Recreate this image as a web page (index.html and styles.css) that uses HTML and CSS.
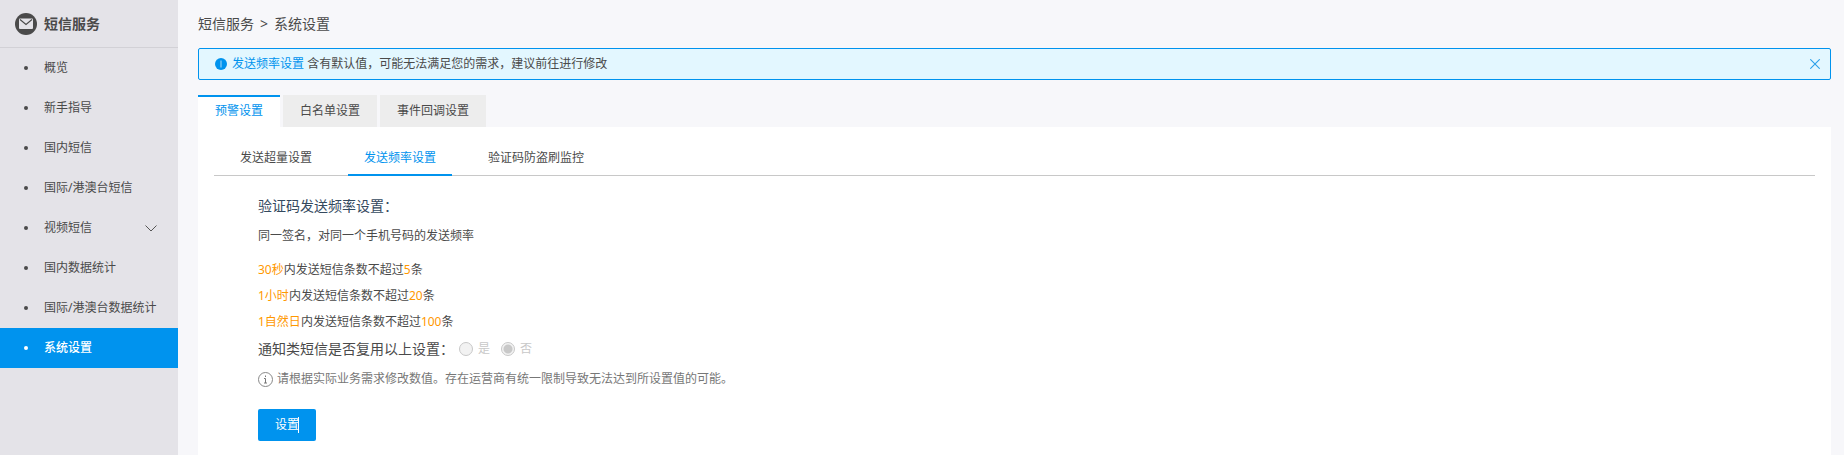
FILE: index.html
```html
<!DOCTYPE html>
<html lang="zh-CN">
<head>
<meta charset="utf-8">
<title>系统设置</title>
<link rel="stylesheet" href="styles.css">
</head>
<body>
<div class="layout">
  <aside class="sidebar">
    <div class="sidebar-head">
      <svg class="brand-icon" viewBox="0 0 22 22" aria-hidden="true"><circle cx="11" cy="11" r="11" fill="#4a4a4a"/><rect x="4" y="5.500" width="14" height="10.500" rx="1" fill="#e4e3e8"/><path d="M5 6.500l6 5L17 6.500" fill="none" stroke="#4a4a4a" stroke-width="1.100"/></svg>
      <span>短信服务</span>
    </div>
    <nav class="menu">
      <a class="menu-item" href="#">概览</a>
      <a class="menu-item" href="#">新手指导</a>
      <a class="menu-item" href="#">国内短信</a>
      <a class="menu-item" href="#">国际/港澳台短信</a>
      <a class="menu-item" href="#">视频短信<svg class="chevron" viewBox="0 0 12 7" aria-hidden="true"><path d="M.5 .5L6 6L11.500 .5" fill="none" stroke="#555" stroke-width="1"/></svg></a>
      <a class="menu-item" href="#">国内数据统计</a>
      <a class="menu-item" href="#">国际/港澳台数据统计</a>
      <a class="menu-item active" href="#">系统设置</a>
    </nav>
  </aside>
  <main class="main">
    <div class="crumbs"><span>短信服务</span><span class="sep">&gt;</span><span>系统设置</span></div>
    <div class="alert">
      <svg class="alert-icon" viewBox="0 0 12 12" aria-hidden="true"><circle cx="6" cy="6" r="6" fill="#0093ee"/><path d="M6 2.500v7" stroke="#8fd0f7" stroke-width="1.200"/></svg>
      <p class="alert-text"><a href="#">发送频率设置</a> 含有默认值，可能无法满足您的需求，建议前往进行修改</p>
      <button class="close" type="button" aria-label="关闭"><svg viewBox="0 0 10 10" aria-hidden="true"><path d="M.3 .3l9.400 9.400M9.700 .3L.3 9.700" stroke="#2ba0ea" stroke-width="1.100"/></svg></button>
    </div>
    <div class="tabs">
      <button class="tab active" type="button">预警设置</button>
      <button class="tab" type="button">白名单设置</button>
      <button class="tab" type="button">事件回调设置</button>
    </div>
    <section class="panel">
      <div class="subtabs">
        <button class="subtab" type="button">发送超量设置</button>
        <button class="subtab active" type="button">发送频率设置</button>
        <button class="subtab" type="button">验证码防盗刷监控</button>
      </div>
      <div class="content">
        <h2 class="title">验证码发送频率设置：</h2>
        <p class="desc">同一签名，对同一个手机号码的发送频率</p>
        <ul class="rules">
          <li><em>30秒</em>内发送短信条数不超过<em>5</em>条</li>
          <li><em>1小时</em>内发送短信条数不超过<em>20</em>条</li>
          <li><em>1自然日</em>内发送短信条数不超过<em>100</em>条</li>
        </ul>
        <div class="reuse">
          <span class="reuse-label">通知类短信是否复用以上设置：</span>
          <label class="radio"><input type="radio" name="reuse" disabled>是</label>
          <label class="radio"><input type="radio" name="reuse" checked disabled>否</label>
        </div>
        <p class="note"><svg class="note-icon" viewBox="0 0 15 15" aria-hidden="true"><circle cx="7.500" cy="7.500" r="7" fill="none" stroke="#888"/><path d="M7.500 3.500v1.500M6 6.500h1.500V11M6 11h3" fill="none" stroke="#777"/></svg>请根据实际业务需求修改数值。存在运营商有统一限制导致无法达到所设置值的可能。</p>
        <button class="primary" type="button">设置<span class="caret"></span></button>
      </div>
    </section>
  </main>
</div>
</body>
</html>
```
FILE: styles.css
```css
* { box-sizing: border-box; }
body {
  margin: 0;
  background: #f7f7fa;
  color: #4a4a4a;
  font: 12px/20px "Noto Sans", "Noto Sans CJK SC", sans-serif;
}
button { font: inherit; color: inherit; border: 0; background: none; padding: 0; }
a { color: inherit; text-decoration: none; }
h2, p, ul { margin: 0; padding: 0; font-weight: normal; }
ul { list-style: none; }
em { font-style: normal; color: #ff9800; }

.layout { display: flex; min-height: 100vh; }
.sidebar { flex: 0 0 178px; background: #e4e3e8; }
.sidebar-head {
  display: flex;
  align-items: center;
  gap: 7px;
  height: 48px;
  padding: 0 15px;
  border-bottom: 1px solid #d2d1d6;
  font-size: 14px;
  font-weight: bold;
}
.brand-icon { width: 22px; height: 22px; }
.menu-item {
  display: flex;
  align-items: center;
  height: 40px;
  padding: 0 21px 0 24px;
}
.menu-item::before {
  content: "";
  width: 4px;
  height: 4px;
  margin-right: 16px;
  border-radius: 50%;
  background: currentColor;
}
.menu-item.active { background: #0093ee; color: #fff; font-weight: 500; }
.chevron { width: 12px; height: 7px; margin-left: auto; }

.main { flex: 1; display: flex; flex-direction: column; padding: 0 13px 0 20px; }
.crumbs { display: flex; align-items: center; height: 48px; font-size: 14px; }
.sep { margin: 0 6px; }
.alert {
  display: flex;
  align-items: center;
  height: 32px;
  padding: 0 10px 0 16px;
  border: 1px solid #0093ee;
  border-radius: 2px;
  background: #e3f7ff;
}
.alert-icon { width: 12px; height: 12px; margin-right: 5px; }
.alert-text { flex: 1; }
.alert-text a { color: #0093ee; }
.close { display: flex; }
.close svg { width: 10px; height: 10px; }

.tabs { display: flex; gap: 3px; margin-top: 15px; }
.tab { height: 32px; padding: 0 17px; background: #ededed; }
.tab.active { padding-bottom: 2px; background: #fff; color: #0093ee; border-top: 2px solid #0093ee; }
.panel { flex: 1; padding: 16px; background: #fff; }
.subtabs {
  display: flex;
  gap: 20px;
  padding-left: 10px;
  background: linear-gradient(#c8c8c8, #c8c8c8) left bottom / 100% 1px no-repeat;
}
.subtab { height: 33px; padding: 0 16px 2px; border-bottom: 2px solid transparent; }
.subtab.active { color: #0093ee; border-bottom-color: #0093ee; }

.content { padding: 20px 44px 0; }
.title { font-size: 14px; color: #34495e; }
.desc { margin-top: 10px; }
.rules { margin-top: 11px; line-height: 26px; }
.reuse { display: flex; align-items: center; height: 28px; }
.reuse-label { font-size: 14px; margin-right: 5px; }
.radio { display: flex; align-items: center; margin-right: 11px; color: #c8c8c8; }
.radio input {
  appearance: none;
  width: 14px;
  height: 14px;
  margin: 0 5px 0 0;
  border: 1px solid #c8c8c8;
  border-radius: 50%;
  background: #f2f2f2;
}
.radio input:checked { background: radial-gradient(circle, #c8c8c8 4px, #f2f2f2 5px); }
.note { display: flex; align-items: center; gap: 4px; margin-top: 6px; color: #777; }
.note-icon { width: 15px; height: 15px; }
.primary {
  position: relative;
  height: 32px;
  margin-top: 20px;
  padding: 0 17px;
  border-radius: 2px;
  background: #0093ee;
  color: #fff;
}
.caret { position: absolute; top: 8px; right: 17px; width: 1px; height: 16px; background: #fff; }
```
